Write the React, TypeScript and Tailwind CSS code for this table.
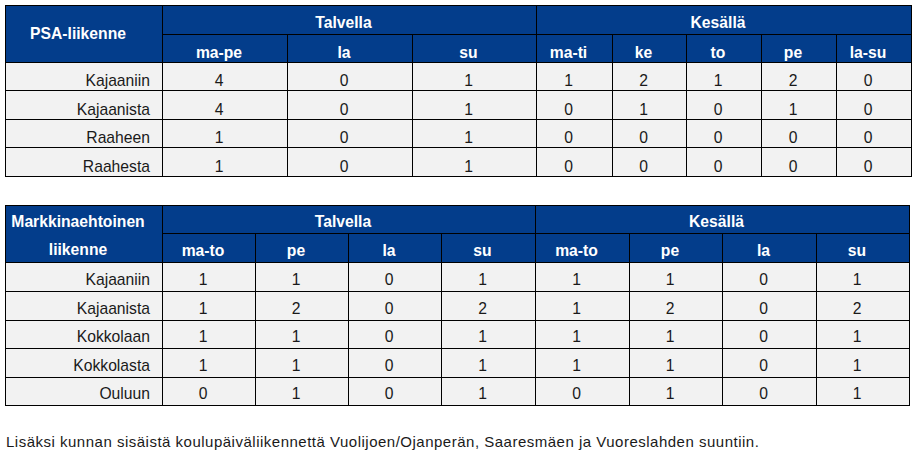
import React from "react";

const FONT = { fontFamily: '"Liberation Sans", Arial, sans-serif' };

type Row = { name: string; vals: (number | string)[] };

const t1Rows: Row[] = [
  { name: "Kajaaniin", vals: [4, 0, 1, 1, 2, 1, 2, 0] },
  { name: "Kajaanista", vals: [4, 0, 1, 0, 1, 0, 1, 0] },
  { name: "Raaheen", vals: [1, 0, 1, 0, 0, 0, 0, 0] },
  { name: "Raahesta", vals: [1, 0, 1, 0, 0, 0, 0, 0] },
];

const t2Rows: Row[] = [
  { name: "Kajaaniin", vals: [1, 1, 0, 1, 1, 1, 0, 1] },
  { name: "Kajaanista", vals: [1, 2, 0, 2, 1, 2, 0, 2] },
  { name: "Kokkolaan", vals: [1, 1, 0, 1, 1, 1, 0, 1] },
  { name: "Kokkolasta", vals: [1, 1, 0, 1, 1, 1, 0, 1] },
  { name: "Ouluun", vals: [0, 1, 0, 1, 0, 1, 0, 1] },
];

const hdr = "bg-[#033d8b] text-white font-bold flex justify-center pr-3 leading-[18px]";

export default function App() {
  return (
    <div className="bg-white w-[917px] h-[456px] pl-[5px] pt-[5px] text-[15.7px]" style={FONT}>
      {/* Table 1 */}
      <div className="grid w-[907px] bg-black p-px gap-px grid-cols-[156px_124px_124px_123px_75px_73px_74px_74px_74px] grid-rows-[28px_27px_27px_28px_27px_28px]">
        <div className={`${hdr} row-span-2 items-center`}>PSA-liikenne</div>
        <div className={`${hdr} col-span-3 items-end pb-[2px]`}>Talvella</div>
        <div className={`${hdr} col-span-5 items-end pb-[2px]`}>Kesällä</div>
        {["ma-pe", "la", "su", "ma-ti", "ke", "to", "pe", "la-su"].map((h, i) => (
          <div key={"h1" + i} className={`${hdr} items-end pb-[0.5px]`}>{h}</div>
        ))}
        {t1Rows.map((r) => (
          <React.Fragment key={r.name}>
            <div className="bg-[#f2f2f2] text-[#1a1a1a] flex items-end justify-end pr-3 leading-[18px]">{r.name}</div>
            {r.vals.map((v, i) => (
              <div key={i} className="bg-[#f2f2f2] text-[#1a1a1a] flex items-end justify-center pr-3 leading-[18px]">{v}</div>
            ))}
          </React.Fragment>
        ))}
      </div>

      {/* Table 2 */}
      <div className="mt-[28px] grid w-[905px] bg-black p-px gap-px grid-cols-[156px_92px_92px_92px_93px_93px_92px_93px_92px] grid-rows-[27px_28px_28px_28px_27px_28px_27px]">
        <div className="row-span-2 bg-[#033d8b] text-white font-bold text-center pr-3 leading-[28px] pt-[2px]">
          Markkinaehtoinen
          <br />
          liikenne
        </div>
        <div className={`${hdr} col-span-4 items-end pb-[2px]`}>Talvella</div>
        <div className={`${hdr} col-span-4 items-end pb-[2px]`}>Kesällä</div>
        {["ma-to", "pe", "la", "su", "ma-to", "pe", "la", "su"].map((h, i) => (
          <div key={"h2" + i} className={`${hdr} items-end pb-[2.5px]`}>{h}</div>
        ))}
        {t2Rows.map((r) => (
          <React.Fragment key={r.name}>
            <div className="bg-[#f2f2f2] text-[#1a1a1a] flex items-end justify-end pr-3 pb-[2.5px] leading-[18px]">{r.name}</div>
            {r.vals.map((v, i) => (
              <div key={i} className="bg-[#f2f2f2] text-[#1a1a1a] flex items-end justify-center pr-3 pb-[2.5px] leading-[18px]">{v}</div>
            ))}
          </React.Fragment>
        ))}
      </div>

      <p className="mt-[27px] ml-[1px] text-[15px] tracking-[0.5px] leading-[18px] text-[#1a1a1a]">
        Lisäksi kunnan sisäistä koulupäiväliikennettä Vuolijoen/Ojanperän, Saaresmäen ja Vuoreslahden suuntiin.
      </p>
    </div>
  );
}
